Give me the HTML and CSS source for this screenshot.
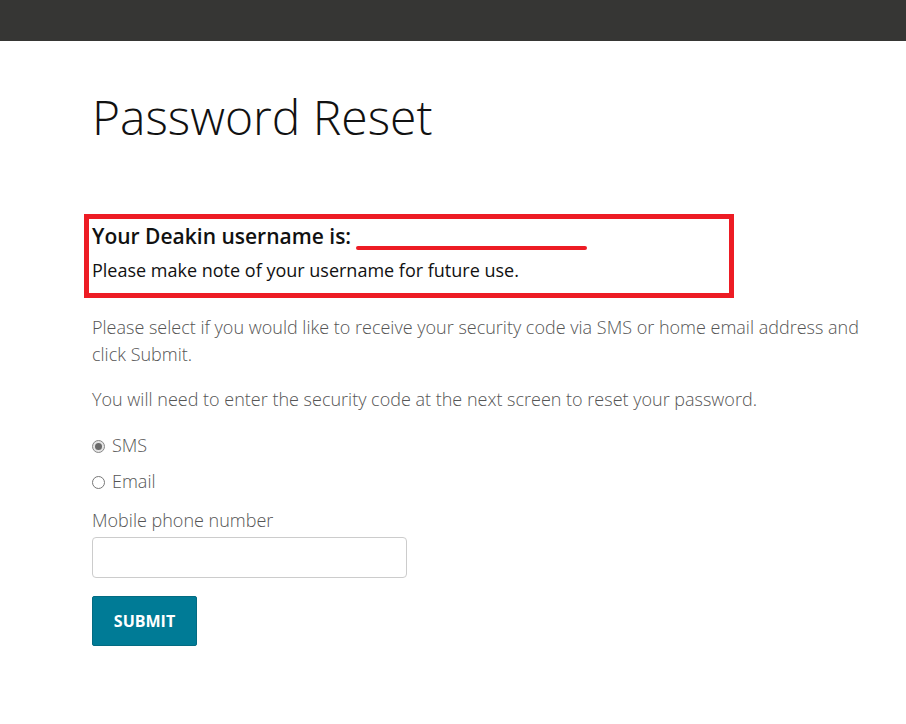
FILE: index.html
```html
<!DOCTYPE html>
<html lang="en">
<head>
<meta charset="utf-8">
<title>Password Reset</title>
<link rel="stylesheet" href="styles.css">
</head>
<body>
<header class="topbar"></header>
<main class="content">
  <h1 class="title">Password Reset</h1>
  <section class="notice">
    <h2 class="notice-head">Your Deakin username is: <span class="redact"></span></h2>
    <p class="notice-text">Please make note of your username for future use.</p>
  </section>
  <p class="info">Please select if you would like to receive your security code via SMS or home email address and click Submit.</p>
  <p class="info info-second">You will need to enter the security code at the next screen to reset your password.</p>
  <form class="form">
    <label class="radio radio-first"><input type="radio" name="method" checked> SMS</label>
    <label class="radio"><input type="radio" name="method"> Email</label>
    <label class="field-label" for="phone">Mobile phone number</label>
    <input class="field" id="phone" type="text">
    <button class="submit" type="button">SUBMIT</button>
  </form>
</main>
</body>
</html>
```
FILE: styles.css
```css
html, body {
  margin: 0;
  padding: 0;
  background: #fff;
  font-family: "Open Sans", "Liberation Sans", sans-serif;
}
.topbar {
  height: 41px;
  background: #363634;
}
.content {
  padding: 0 30px 0 92px;
}
.title {
  margin: 48px 0 0 0;
  font-size: 48px;
  font-weight: 300;
  color: #111;
  line-height: 56px;
}
.notice {
  margin: 69px 0 0 -8px;
  width: 634px;
  border: 5px solid #ed1c24;
  padding: 3px 3px 9px 3px;
}
.notice-head {
  margin: 0;
  font-size: 21px;
  font-weight: 600;
  color: #111;
  line-height: 28px;
  display: flex;
  align-items: flex-end;
}
.redact {
  display: inline-block;
  width: 231px;
  height: 4px;
  background: #ed1c24;
  border-radius: 2px;
  margin: 0 0 0 5px;
}
.notice-text {
  margin: 7px 0 0;
  font-size: 18px;
  color: #111;
  line-height: 27px;
}
.info {
  margin: 16px 0 0;
  font-size: 18px;
  font-weight: 300;
  color: #555;
  line-height: 27px;
}
.info-second {
  margin-top: 18px;
}
.form {
  display: flex;
  flex-direction: column;
  align-items: flex-start;
  margin-top: 19px;
}
.radio {
  display: flex;
  align-items: center;
  gap: 7px;
  font-size: 18px;
  font-weight: 300;
  color: #555;
  line-height: 27px;
  margin-top: 9px;
}
.radio-first {
  margin-top: 0;
}
.radio input {
  appearance: none;
  -webkit-appearance: none;
  margin: 2px 0 0;
  width: 13px;
  height: 13px;
  border: 1px solid #777;
  border-radius: 50%;
  background: #fff;
  box-sizing: border-box;
  display: grid;
  place-items: center;
}
.radio input:checked {
  background: #e4e4e4;
  border-color: #888;
}
.radio input:checked::before {
  content: "";
  width: 7px;
  height: 7px;
  border-radius: 50%;
  background: #6a6a6a;
}
.field-label {
  font-size: 18px;
  font-weight: 300;
  color: #555;
  line-height: 27px;
  margin-top: 12px;
}
.field {
  margin-top: 3px;
  width: 315px;
  height: 41px;
  box-sizing: border-box;
  border: 1px solid #ccc;
  border-radius: 4px;
}
.submit {
  margin-top: 18px;
  width: 105px;
  height: 50px;
  background: #007b96;
  border: 1px solid #036b82;
  border-radius: 2px;
  color: #fff;
  font-family: "Open Sans", "Liberation Sans", sans-serif;
  font-weight: 700;
  font-size: 16px;
  padding: 0;
}
```
